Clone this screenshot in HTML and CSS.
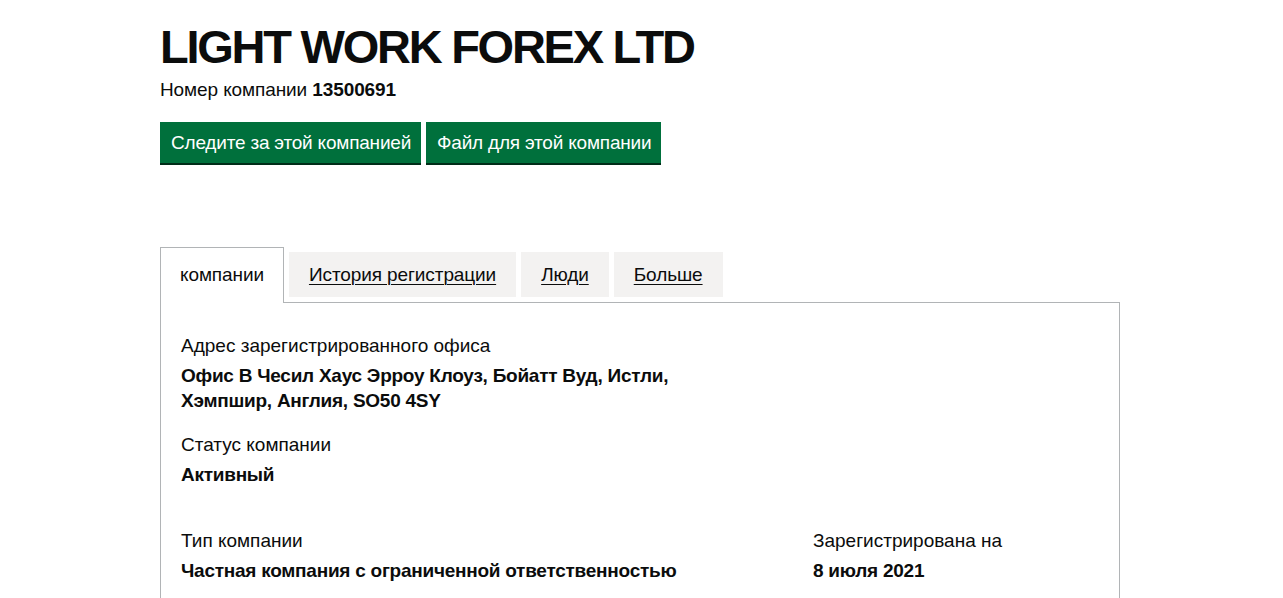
FILE: index.html
```html
<!DOCTYPE html>
<html lang="ru">
<head>
<meta charset="utf-8">
<title>LIGHT WORK FOREX LTD</title>
<link rel="stylesheet" href="styles.css">
</head>
<body>
<main class="page">
  <h1 class="heading">LIGHT WORK FOREX LTD</h1>
  <p class="company-number">Номер компании <strong>13500691</strong></p>
  <div class="actions">
    <a class="button" href="#">Следите за этой компанией</a>
    <a class="button" href="#">Файл для этой компании</a>
  </div>

  <div class="tabs">
    <ul class="tab-list">
      <li class="tab tab-selected"><span class="tab-link">компании</span></li>
      <li class="tab"><a class="tab-link" href="#">История регистрации</a></li>
      <li class="tab"><a class="tab-link" href="#">Люди</a></li>
      <li class="tab"><a class="tab-link" href="#">Больше</a></li>
    </ul>
    <section class="panel">
      <dl class="data">
        <dt class="label">Адрес зарегистрированного офиса</dt>
        <dd class="value">Офис В Чесил Хаус Эрроу Клоуз, Бойатт Вуд, Истли,<br>Хэмпшир, Англия, SO50 4SY</dd>
      </dl>
      <dl class="data">
        <dt class="label">Статус компании</dt>
        <dd class="value">Активный</dd>
      </dl>
      <div class="row">
        <dl class="data col-two-thirds">
          <dt class="label">Тип компании</dt>
          <dd class="value">Частная компания с ограниченной ответственностью</dd>
        </dl>
        <dl class="data col-one-third">
          <dt class="label">Зарегистрирована на</dt>
          <dd class="value">8 июля 2021</dd>
        </dl>
      </div>
    </section>
  </div>
</main>
</body>
</html>
```

FILE: styles.css
```css
* { box-sizing: border-box; }
html, body { margin: 0; padding: 0; background: #fff; }
body {
  font-family: "Liberation Sans", Arial, sans-serif;
  color: #0b0c0c;
  font-size: 19px;
  line-height: 25px;
}
.page {
  width: 960px;
  margin-left: 160px;
  padding-top: 20px;
}
.heading {
  margin: 0;
  font-size: 47px;
  line-height: 54px;
  font-weight: 700;
  letter-spacing: -2.25px;
}
.company-number {
  margin: 3px 0 0;
  font-size: 19px;
  line-height: 25px;
  letter-spacing: -0.1px;
}
.company-number strong { font-weight: 700; }
.actions {
  display: flex;
  gap: 5px;
  margin-top: 20px;
}
.button {
  display: inline-block;
  background: #00703c;
  color: #fff;
  text-decoration: none;
  font-size: 19px;
  line-height: 24px;
  letter-spacing: -0.2px;
  padding: 9px 10px 8px 11px;
  box-shadow: 0 2px 0 #002d18;
}
.tabs { margin-top: 84px; }
.tab-list {
  list-style: none;
  margin: 0;
  padding: 0;
  display: flex;
  align-items: flex-start;
}
.tab {
  margin-top: 5px;
  margin-right: 5px;
  background: #f3f2f1;
  padding: 10px 20px;
  letter-spacing: -0.1px;
}
.tab-link {
  color: #0b0c0c;
  text-decoration: underline;
  text-underline-offset: 3px;
  text-decoration-thickness: 1px;
}
.tab-selected {
  margin-top: 0;
  background: #fff;
  border: 1px solid #b1b4b6;
  border-bottom: 0;
  padding: 14px 19px 16px;
  margin-bottom: -1px;
  position: relative;
}
.tab-selected .tab-link { text-decoration: none; }
.panel {
  border: 1px solid #b1b4b6;
  padding: 30px 20px 20px;
  min-height: 320px;
}
.data { margin: 0 0 19px; }
.label { margin: 0 0 5px; }
.value { margin: 0; font-weight: 700; letter-spacing: -0.25px; }
.row {
  display: flex;
  margin: 41px -15px 0;
}
.col-two-thirds { width: 66.6667%; padding: 0 15px; }
.col-one-third { width: 33.3333%; padding: 0 15px; }
```
